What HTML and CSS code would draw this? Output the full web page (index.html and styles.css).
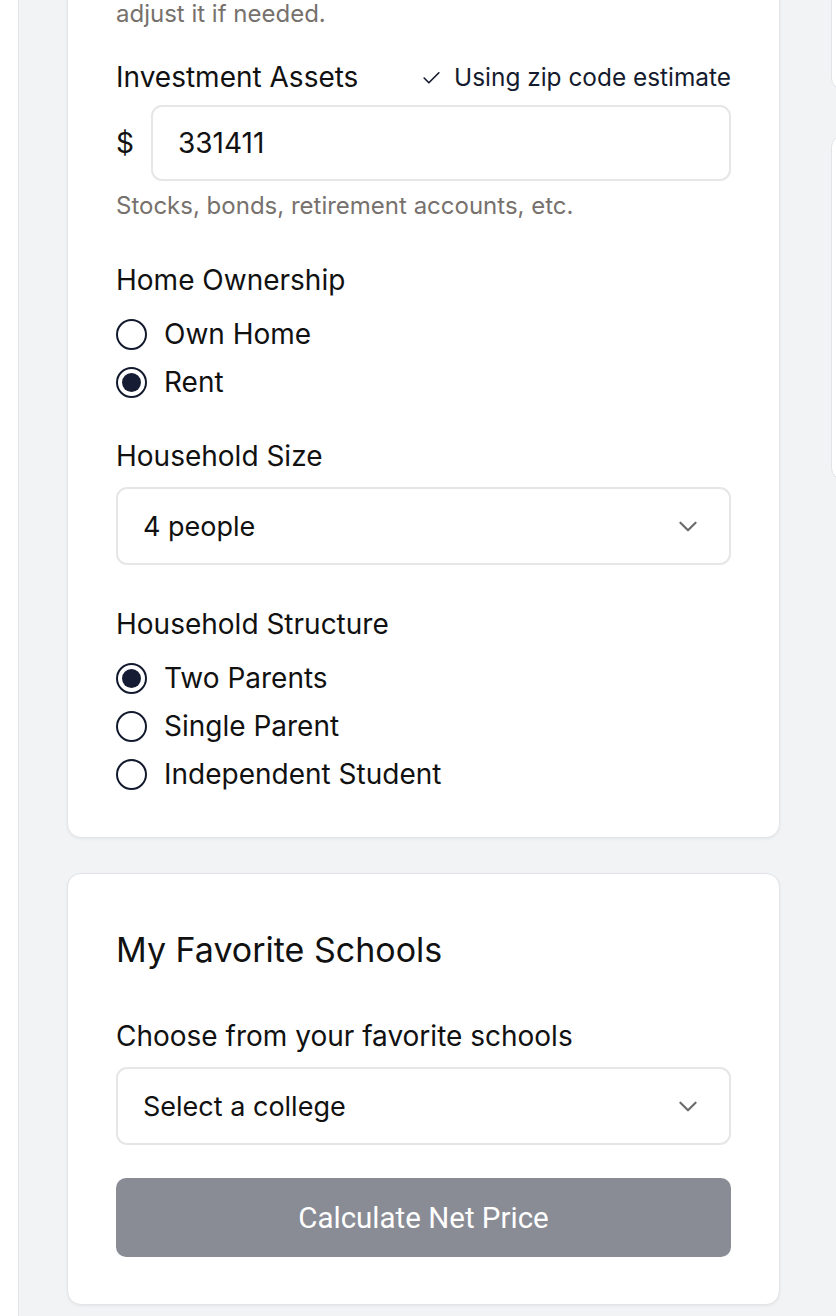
FILE: index.html
```html
<!DOCTYPE html>
<html lang="en">
<head>
<meta charset="utf-8">
<title>Net Price Calculator</title>
<link rel="stylesheet" href="styles.css">
</head>
<body>
<div class="layout">
  <aside class="strip"></aside>
  <main class="main">
    <div class="col-left">
      <section class="card card-top">
        <p class="intro">adjust it if needed.</p>

        <div class="label-row">
          <span class="label">Investment Assets</span>
          <span class="estimate">
            <svg class="check" viewBox="0 0 20 20" width="21" height="21"><path d="M3 10.5l4.5 4.5 9.5-9.5" fill="none" stroke="currentColor" stroke-width="1.6" stroke-linecap="round" stroke-linejoin="round"/></svg>
            Using zip code estimate
          </span>
        </div>
        <div class="money-row">
          <span class="dollar">$</span>
          <div class="input">331411</div>
        </div>
        <p class="help">Stocks, bonds, retirement accounts, etc.</p>

        <div class="label group-label">Home Ownership</div>
        <div class="radios">
          <div class="radio-row"><span class="radio"></span><span>Own Home</span></div>
          <div class="radio-row"><span class="radio checked"></span><span>Rent</span></div>
        </div>

        <div class="label group-label">Household Size</div>
        <div class="select">
          <span>4 people</span>
          <svg class="chev" viewBox="0 0 24 24" width="26" height="26"><path d="M5 9l7 7 7-7" fill="none" stroke="currentColor" stroke-width="2" stroke-linecap="round" stroke-linejoin="round"/></svg>
        </div>

        <div class="label group-label">Household Structure</div>
        <div class="radios">
          <div class="radio-row"><span class="radio checked"></span><span>Two Parents</span></div>
          <div class="radio-row"><span class="radio"></span><span>Single Parent</span></div>
          <div class="radio-row"><span class="radio"></span><span>Independent Student</span></div>
        </div>
      </section>

      <section class="card card-bottom">
        <h2 class="title">My Favorite Schools</h2>
        <div class="label choose-label">Choose from your favorite schools</div>
        <div class="select">
          <span>Select a college</span>
          <svg class="chev" viewBox="0 0 24 24" width="26" height="26"><path d="M5 9l7 7 7-7" fill="none" stroke="currentColor" stroke-width="2" stroke-linecap="round" stroke-linejoin="round"/></svg>
        </div>
        <button class="calc" type="button">Calculate Net Price</button>
      </section>
    </div>
    <div class="col-right">
      <div class="side-card side-a"></div>
      <div class="side-card side-b"></div>
    </div>
  </main>
</div>
</body>
</html>
```
FILE: styles.css
```css
* { box-sizing: border-box; }
html, body { margin: 0; padding: 0; }
body {
  background: #ffffff;
  font-family: Inter, "Noto Sans", "Liberation Sans", sans-serif;
  color: #111111;
  overflow: hidden;
}
.layout {
  display: flex;
  width: 836px;
  min-height: 1316px;
  overflow: hidden;
}
.strip {
  width: 18px;
  flex: none;
  background: #ffffff;
}
.main {
  flex: 1;
  min-width: 0;
  overflow: hidden;
  background: #f2f3f5;
  border-left: 1px solid #e4e5e8;
  padding-left: 48px;
  display: flex;
  gap: 51px;
  align-items: flex-start;
  margin-top: -40px;
}
.col-left {
  width: 713px;
  flex: none;
  display: flex;
  flex-direction: column;
  gap: 35px;
}
.col-right {
  flex: 1;
  min-width: 0;
  display: flex;
  flex-direction: column;
  gap: 45px;
}
.side-card {
  background: #ffffff;
  border: 1px solid #e2e3e6;
  border-radius: 12px;
  width: 300px;
  flex: none;
}
.side-a { height: 130px; }
.side-b { height: 345px; }

.card {
  background: #ffffff;
  border: 1px solid #e3e4e7;
  border-radius: 14px;
  box-shadow: 0 1px 3px rgba(0,0,0,0.06);
  padding: 0 48px;
}
.card-top { padding-bottom: 39px; padding-top: 37px; }
.card-bottom { padding-top: 54px; padding-bottom: 47px; }

.intro {
  margin: 0;
  font-size: 24px;
  line-height: 32px;
  color: #77716d;
}
.label {
  font-size: 28px;
  line-height: 36px;
  color: #111111;
}
.label-row {
  margin-top: 29px;
  display: flex;
  justify-content: space-between;
  align-items: center;
  height: 36px;
}
.estimate {
  display: flex;
  align-items: center;
  gap: 12px;
  font-size: 24.4px;
  color: #151b2e;
}
.check { color: #151b2e; }
.money-row {
  margin-top: 10px;
  display: flex;
  align-items: center;
  gap: 16px;
}
.dollar {
  font-size: 28px;
  color: #111111;
  width: 19px;
}
.input {
  flex: 1;
  height: 76px;
  border: 2px solid #e6e6e6;
  border-radius: 11px;
  display: flex;
  align-items: center;
  padding-left: 25px;
  font-size: 28px;
  color: #111111;
}
.help {
  margin: 9px 0 0;
  font-size: 24px;
  line-height: 32px;
  color: #77716d;
}
.group-label { margin-top: 40px; }
.radios {
  margin-top: 12px;
  display: flex;
  flex-direction: column;
}
.radio-row {
  height: 48px;
  display: flex;
  align-items: center;
  gap: 17px;
  font-size: 28px;
  color: #111111;
}
.radio {
  width: 31px;
  height: 31px;
  flex: none;
  border: 2px solid #141a2e;
  border-radius: 50%;
  display: flex;
  align-items: center;
  justify-content: center;
  background: #fff;
}
.radio.checked::after {
  content: "";
  width: 19px;
  height: 19px;
  border-radius: 50%;
  background: #161c33;
}
.select {
  margin-top: 13px;
  height: 78px;
  border: 2px solid #e6e6e6;
  border-radius: 11px;
  display: flex;
  align-items: center;
  justify-content: space-between;
  padding: 0 28px 0 25px;
  font-size: 27px;
  color: #111111;
}
.chev { color: #6b6b6b; }
.card-top .radios + .group-label { margin-top: 32px; }
.card-top .select + .group-label { margin-top: 41px; }

.title {
  margin: 0;
  font-size: 34px;
  line-height: 44px;
  font-weight: 400;
  color: #111111;
}
.choose-label { margin-top: 46px; }
.calc {
  display: block;
  width: 100%;
  margin-top: 33px;
  height: 79px;
  border: none;
  border-radius: 10px;
  background: #8a8c95;
  color: #ffffff;
  font-family: Roboto, "Liberation Sans", sans-serif;
  font-size: 29.5px;
}
```
